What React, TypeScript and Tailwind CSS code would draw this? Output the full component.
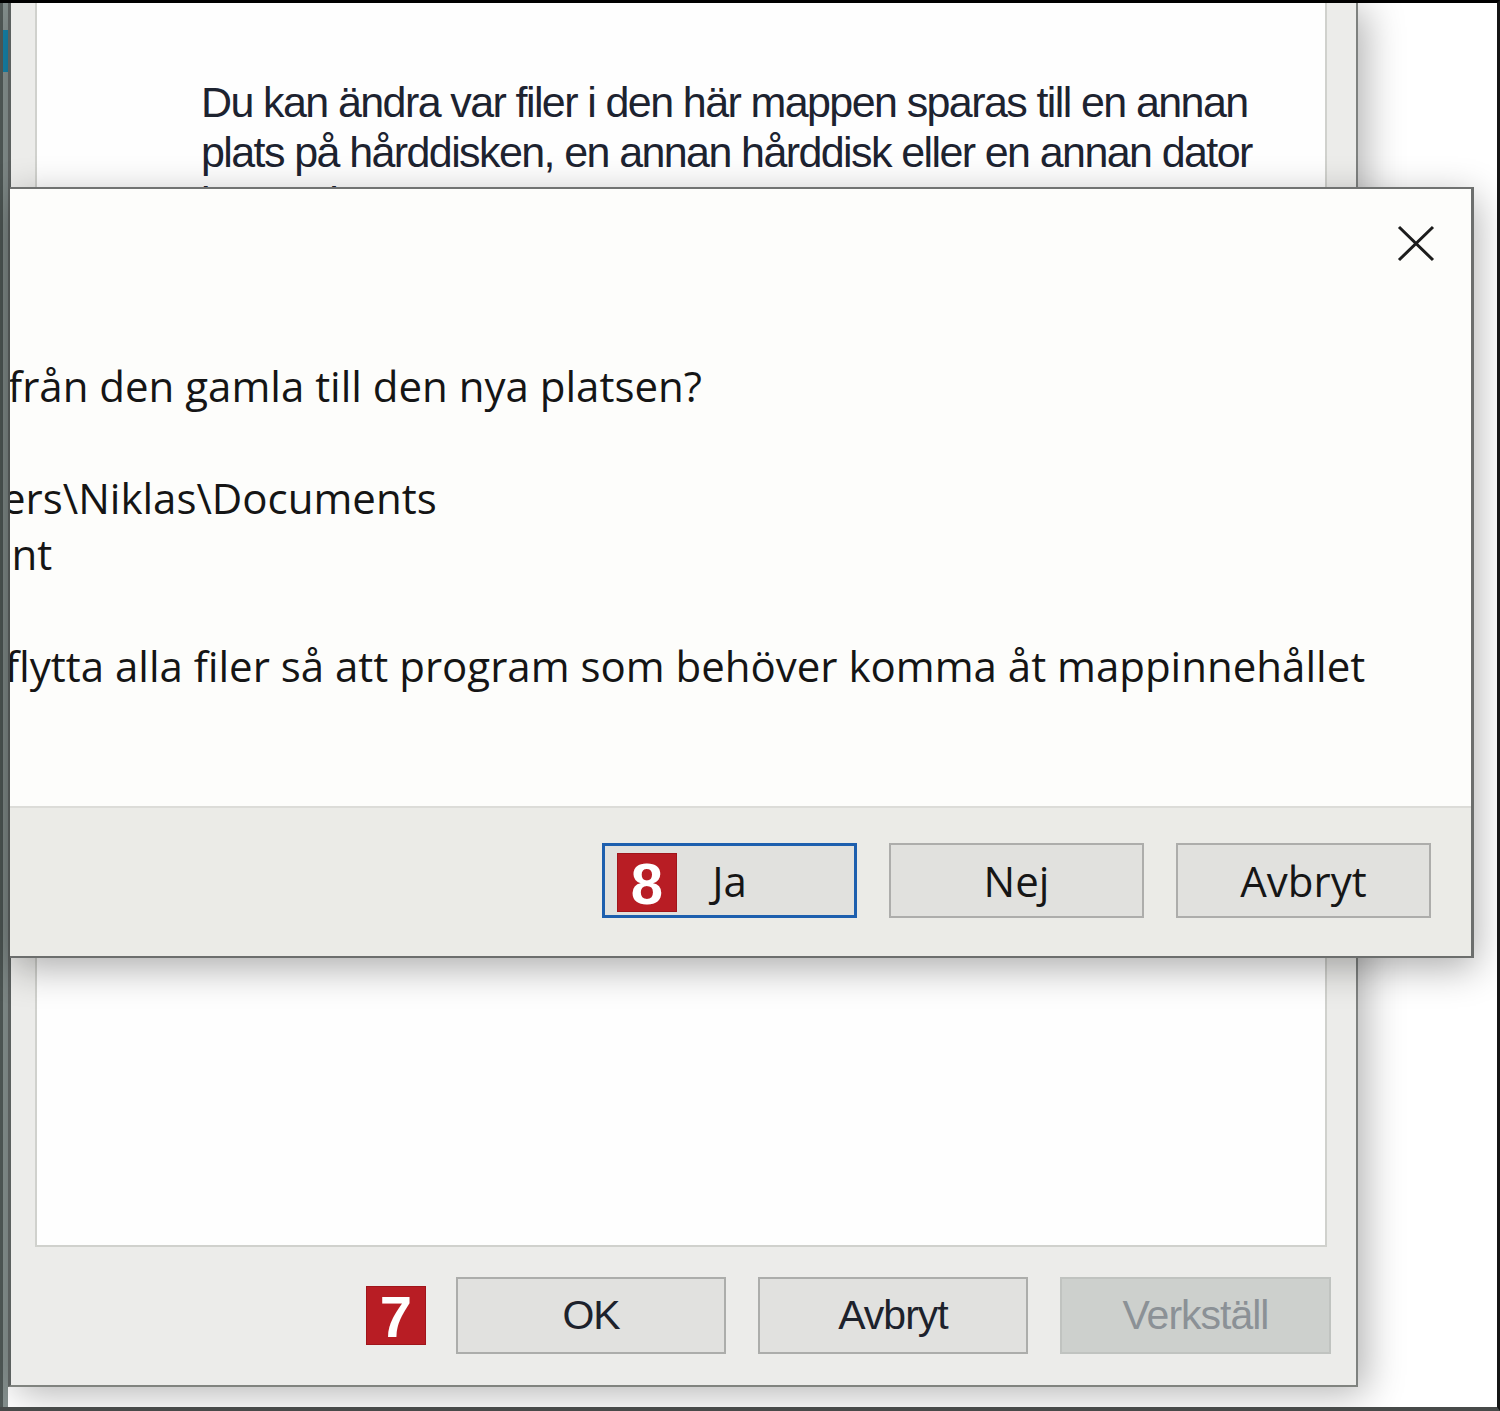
import React from "react";

function Badge({ n }: { n: string }) {
  return (
    <div className="w-[60px] h-[59px] bg-[#b81d24] border border-[#a0151b] flex items-center justify-center text-white font-['Liberation_Sans',Arial,sans-serif] font-bold text-[58px] leading-none">
      <span className="mt-[3px]">{n}</span>
    </div>
  );
}

function WinButton({ label, disabled }: { label: string; disabled?: boolean }) {
  return (
    <div
      className={
        disabled
          ? "w-[271px] h-[77px] bg-[#cdd0cd] border-2 border-[#c0c3c0] flex items-center justify-center text-[41px] tracking-[-1px] text-[#8b9196]"
          : "w-[270px] h-[77px] bg-[#e1e1df] border-2 border-[#acadab] flex items-center justify-center text-[41px] tracking-[-1px] text-[#1d222c]"
      }
    >
      {label}
    </div>
  );
}

function DlgButton({ label, focused }: { label: string; focused?: boolean }) {
  return (
    <div
      className={
        focused
          ? "relative w-[255px] h-[75px] bg-[#e1e1de] border-[3px] border-[#1d5fae] flex items-center justify-center text-[42px] text-[#161616]"
          : "relative w-[255px] h-[75px] bg-[#e1e1de] border-2 border-[#adadab] flex items-center justify-center text-[42px] text-[#161616]"
      }
    >
      {focused && (
        <div className="absolute left-[12px] top-[7px]">
          <Badge n="8" />
        </div>
      )}
      <span className="leading-none">{label}</span>
    </div>
  );
}

export default function App() {
  return (
    <div className="relative w-[1500px] h-[1411px] overflow-hidden bg-white border-t-[3px] border-t-black border-r-[3px] border-r-[#151515] border-b-[4px] border-b-[#474a49] flex font-['Liberation_Sans',Arial,sans-serif]">
      {/* left stripe */}
      <div className="w-[8px] shrink-0 flex">
        <div className="w-[3px] bg-[#515a58]" />
        <div className="w-[5px] bg-[#85908e] flex flex-col">
          <div className="h-[27px]" />
          <div className="h-[42px] bg-[#1680a6]" />
        </div>
      </div>

      {/* background window */}
      <div className="flex flex-col shrink-0">
        <div className="w-[1350px] h-[1384px] flex flex-col bg-[#ececea] border-l-[3px] border-l-[#5b605f] border-r-2 border-r-[#7e817f] border-b-2 border-b-[#80837f] shadow-[8px_6px_36px_rgba(0,0,0,0.3)]">
          <div className="ml-[24px] mr-[29px] h-[1244px] bg-[#fefefe] border-l-2 border-r-2 border-b-2 border-[#d0d1cd] pl-[164px] pt-[74px] text-[43px] leading-[50px] tracking-[-1.6px] text-[#1d2330]">
            <div className="whitespace-nowrap">Du kan ändra var filer i den här mappen sparas till en annan</div>
            <div className="whitespace-nowrap">plats på hårddisken, en annan hårddisk eller en annan dator</div>
            <div className="whitespace-nowrap">i nätverket.</div>
          </div>
          <div className="flex-1 flex items-center justify-end pr-[25px] pb-[1px]">
            <div className="mr-[30px]">
              <Badge n="7" />
            </div>
            <div className="flex gap-[32px]">
              <WinButton label="OK" />
              <WinButton label="Avbryt" />
              <WinButton label="Verkställ" disabled />
            </div>
          </div>
        </div>
      </div>

      {/* message box overlay */}
      <div className="absolute left-[10px] top-[184px] w-[1464px] h-[771px] overflow-hidden flex flex-col bg-[#fdfdfb] border-t-2 border-t-[#707271] border-r-[3px] border-r-[#6c6e6d] border-b-2 border-b-[#6c6e6d] shadow-[2px_10px_36px_rgba(0,0,0,0.32)] font-['Open_Sans',sans-serif]">
        <div className="h-[617px] flex flex-col">
          <div className="flex justify-end pt-[36px] pr-[36px]">
            <svg width="38" height="37" viewBox="0 0 38 37">
              <path d="M2 2 L36 35 M36 2 L2 35" stroke="#1c1c1c" strokeWidth="3" fill="none" />
            </svg>
          </div>
          <div className="mt-[96px] text-[42px] leading-[56px] text-[#151515] whitespace-nowrap">
            <div className="-ml-[2px]">från den gamla till den nya platsen?</div>
            <div>&nbsp;</div>
            <div className="-ml-[8px]">ers\Niklas\Documents</div>
            <div className="-ml-[22px]">ent</div>
            <div>&nbsp;</div>
            <div className="-ml-[5px]">flytta alla filer så att program som behöver komma åt mappinnehållet</div>
          </div>
        </div>
        <div className="flex-1 bg-[#ebebe7] border-t-2 border-t-[#dcdcd8] flex justify-end items-start pt-[35px] pr-[40px] gap-[32px]">
          <DlgButton label="Ja" focused />
          <DlgButton label="Nej" />
          <DlgButton label="Avbryt" />
        </div>
      </div>
    </div>
  );
}
